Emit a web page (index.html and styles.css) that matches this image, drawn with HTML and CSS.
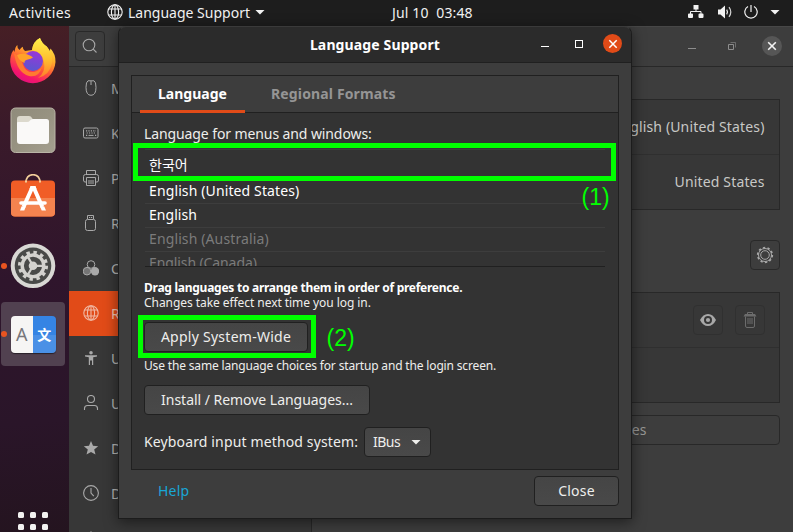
FILE: index.html
```html
<!DOCTYPE html>
<html lang="en">
<head>
<meta charset="utf-8">
<title>Language Support</title>
<link rel="stylesheet" href="styles.css">
</head>
<body>
<svg class="defs" width="0" height="0">
  <defs>
    <symbol id="globe" viewBox="0 0 16 16"><g fill="none" stroke="currentColor" stroke-width="1.1"><circle cx="8" cy="8" r="7.2"/><ellipse cx="8" cy="8" rx="3.6" ry="7.2"/><path d="M8 .8v14.4M1.6 5h12.8M1.6 11h12.8"/></g></symbol>
  </defs>
</svg>
<header class="topbar">
  <span class="activities">Activities</span>
  <div class="appmenu">
    <svg class="ic16" viewBox="0 0 16 16"><use href="#globe"/></svg>
    <span>Language Support</span>
    <i class="caret"></i>
  </div>
  <span class="clock">Jul 10 &nbsp;03:48</span>
  <div class="tray">
    <svg width="16" height="14" viewBox="0 0 16 14"><path fill="currentColor" d="M5.500 0h5v4.500h-5zM0 9.500q0-1 1-1h3q1 0 1 1V12q0 1-1 1H1q-1 0-1-1zM10.500 9.500q0-1 1-1h3q1 0 1 1V12q0 1-1 1h-3q-1 0-1-1z"/><path fill="none" stroke="currentColor" d="M8 4v2.500M2.500 9V6.500h10.500V9"/></svg>
    <svg width="16" height="14" viewBox="0 0 16 14"><path fill="currentColor" d="M1 4.500h2.500L8 .5v13L3.500 9.500H1z"/><path fill="none" stroke="currentColor" stroke-width="1.200" d="M9.700 4.700q1.500 2.300 0 4.600"/><path fill="none" stroke="currentColor" stroke-width="1.200" opacity=".85" d="M12 2.200q3.600 4.800 0 9.600"/></svg>
    <svg width="14" height="14" viewBox="0 0 14 14"><path fill="none" stroke="currentColor" stroke-width="1.200" d="M4 1.500a6.200 6.200 0 1 0 6 0M7 0v7"/></svg>
    <i class="caret"></i>
  </div>
</header>

<div class="desktop">
  <nav class="dock">
    <div class="tile">
      <svg width="48" height="48" viewBox="0 0 48 48">
        <defs>
          <linearGradient id="fx" x1=".8" y1="0" x2=".3" y2="1"><stop offset="0" stop-color="#fff44f"/><stop offset=".35" stop-color="#ffb12b"/><stop offset=".6" stop-color="#ff5a36"/><stop offset=".85" stop-color="#f5156c"/><stop offset="1" stop-color="#e0107e"/></linearGradient>
          <linearGradient id="fy" x1=".5" y1="0" x2=".5" y2="1"><stop offset="0" stop-color="#fff04a"/><stop offset=".55" stop-color="#ffbd2e"/><stop offset="1" stop-color="#ff7a2d"/></linearGradient>
          <linearGradient id="fp" x1=".6" y1="0" x2=".4" y2="1"><stop offset="0" stop-color="#9a35d8"/><stop offset="1" stop-color="#5a57d0"/></linearGradient>
        </defs>
        <path fill="url(#fx)" d="M8.300 7Q8 10 10.500 12Q12 9.500 13.700 8.700Q13.800 11.500 16 13L23 12Q24 3.500 31 0Q32.500 5 37.700 8.500Q40 11 40.500 14L41.500 10.500Q46.700 16 46.500 24A22.700 22.700 0 0 1 1.200 24Q1 17 4.500 12L5.500 14Q6 9 8.300 7z"/>
        <path fill="url(#fy)" d="M23 12Q24 3.500 31 0Q32.500 5 37.700 8.500Q44 15 43 25Q41 37 29 40Q37 34 35 24Q33 14 23 12z"/>
        <circle cx="24" cy="23" r="10" fill="url(#fp)"/>
        <path fill="#ff7a30" d="M5 15Q12 20 14 27Q17 35 25 34Q30 33 33 29Q30 40 20 38Q8 35 5 15z"/>
        <path fill="#ffa229" d="M8 17Q15 14 22 18L24 19.500Q22 21 19 21.500Q15 22 15.500 25Q10 23 8 17z"/>
      </svg>
    </div>
    <div class="tile">
      <svg width="48" height="48" viewBox="0 0 48 48">
        <defs><linearGradient id="fg" x1="0" y1="0" x2="1" y2="1"><stop offset="0" stop-color="#8f8b7b"/><stop offset=".5" stop-color="#979281"/><stop offset="1" stop-color="#a5a090"/></linearGradient></defs>
        <rect x="2" y="2" width="44" height="44.500" rx="4.500" fill="url(#fg)" stroke="#b9b4a6"/>
        <path fill="#dcd9cd" d="M8 13q0-3 3-3h9q2 0 3 2l1 1.500h9v8H8z"/>
        <path fill="#faf9f8" d="M8 17q0-1 1-1h9q2 0 3-1.500t3-1.500h13.500q2.500 0 2.500 2.500V35q0 3-3 3H11q-3 0-3-3z"/>
      </svg>
    </div>
    <div class="tile">
      <svg width="48" height="48" viewBox="0 0 48 48">
        <path fill="none" stroke="#f3cf9b" stroke-width="1.600" d="M16.800 9V8q1-7.300 7.200-7.300T31.200 8v1"/>
        <rect x="2" y="6.500" width="44" height="36" rx="4" fill="#f15d26"/>
        <path fill="#f4834f" d="M2 24h44v14.500q0 4-4 4H6q-4 0-4-4z"/>
        <path fill="#f3cf9b" d="M16 6.500h2v2h-2zM30 6.500h2v2h-2z"/>
        <g stroke="#fff" fill="none"><path stroke-width="4" d="M23.500 13L14.500 33M24.500 13l8.800 20"/><path stroke-width="3.600" stroke-linecap="round" d="M12 29h24"/></g>
        <path fill="#fff" d="M21.500 12h5l1 3h-7zM12.500 32.500l4.300 0-1.500 4H11zM31 32.500h4.300l1.700 4h-4.300z"/>
      </svg>
    </div>
    <div class="tile running">
      <svg width="48" height="48" viewBox="0 0 48 48">
        <circle cx="24" cy="23.800" r="22.300" fill="#d8d8d4"/><circle cx="24" cy="23.800" r="18.300" fill="#484a48"/>
        <circle cx="24" cy="23.800" r="13.300" fill="none" stroke="#d2d2ce" stroke-width="3.500" stroke-dasharray="3.400 3.564"/>
        <circle cx="24" cy="23.800" r="10.800" fill="none" stroke="#d2d2ce" stroke-width="3.400"/>
        <circle cx="24" cy="23.800" r="4.300" fill="#d2d2ce"/>
        <path stroke="#d2d2ce" stroke-width="2.200" d="M24 23.800h10M24 23.800l-5-8.700M24 23.800l-5 8.700"/>
      </svg>
    </div>
    <div class="tile running active">
      <div class="langicon"><span class="la">A</span><span class="lb">文</span></div>
    </div>
    <div class="appgrid"><i></i><i></i><i></i><i></i><i></i><i></i></div>
  </nav>

  <main class="settings">
    <div class="sethead">
      <div class="sqbtn search"><svg class="ic16" viewBox="0 0 16 16"><g fill="none" stroke="currentColor" stroke-width="1.100"><circle cx="7" cy="7" r="5.800"/><path d="M11.200 11.200l3.300 3.300"/></g></svg></div>
      <div class="wbtns">
        <i class="wmin"></i>
        <svg class="wrest" width="9" height="9" viewBox="0 0 9 9"><path fill="none" stroke="currentColor" d="M.5 2.500h5v5h-5z"/><path fill="none" stroke="currentColor" opacity=".6" d="M2.500.5h5v5"/></svg>
        <span class="wclose"><svg width="10" height="10" viewBox="0 0 10 10"><path stroke="currentColor" stroke-width="1.600" d="M1.200 1.200l7.600 7.600M8.800 1.200L1.200 8.800"/></svg></span>
      </div>
    </div>
    <div class="setbody">
      <ul class="sidebar">
        <li><svg class="ic16" viewBox="0 0 16 16"><path fill="none" stroke="currentColor" d="M5 .8h6q2 1 2 6.500 0 8-5 8t-5-8Q3 1.800 5 .8zM8 1v4"/></svg><span>M</span></li>
        <li><svg class="ic16" viewBox="0 0 16 16"><rect x=".5" y="3" width="14.500" height="10" rx="1.500" fill="none" stroke="currentColor"/><path fill="none" stroke="currentColor" stroke-width="1.200" stroke-dasharray="1.200 1.200" d="M3 5.800h10M3.600 8h9M3 10.400h1.300M12 10.400h1.300"/><path stroke="currentColor" d="M5.500 10.400h5"/></svg><span>K</span></li>
        <li><svg class="ic16" viewBox="0 0 16 16"><path fill="none" stroke="currentColor" d="M3.500 4.500V.5h9v4M3 12H2Q.5 12 .5 10V6.500Q.5 4.500 2.500 4.500h11q2 0 2 2V10q0 2-1.500 2h-1M3.500 7.500h9v8h-9zM5 11h6M5 13h6"/></svg><span>P</span></li>
        <li><svg class="ic16" viewBox="0 0 16 16"><path fill="none" stroke="currentColor" d="M4.500 4V.5h6V4M6 2.500h1.200M8 2.500h1.200"/><rect x="2.500" y="4.500" width="10" height="11" rx="2" fill="none" stroke="currentColor"/></svg><span>R</span></li>
        <li><svg class="ic16" viewBox="0 0 16 16"><circle cx="8" cy="4.500" r="3.800" fill="none" stroke="currentColor"/><circle cx="4" cy="11.200" r="3.800" fill="currentColor" fill-opacity=".55" stroke="currentColor"/><circle cx="12" cy="11.200" r="4.200" fill="currentColor"/></svg><span>C</span></li>
        <li class="sel"><svg class="ic16" viewBox="0 0 16 16"><use href="#globe"/></svg><span>R</span></li>
        <li><svg class="ic16" viewBox="0 0 16 16"><path fill="currentColor" d="M8 1a1.800 1.800 0 1 1 0 3.600A1.800 1.800 0 0 1 8 1zM2 5.200h12v1.300l-3.800.8V15H9v-4.500H7V15H5.800V7.300L2 6.500z"/></svg><span>U</span></li>
        <li><svg class="ic16" viewBox="0 0 16 16"><g fill="none" stroke="currentColor" stroke-width="1.100"><circle cx="8" cy="4" r="3.500"/><path d="M1.500 15v-1.500q0-3 3-3h7q3 0 3 3V15"/></g></svg><span>U</span></li>
        <li><svg class="ic16" viewBox="0 0 16 16"><path fill="currentColor" d="M8 1l2 4.800 5.200.4-4 3.400 1.300 5L8 11.900l-4.500 2.700 1.300-5-4-3.400L6 5.800z"/></svg><span>D</span></li>
        <li><svg class="ic16" viewBox="0 0 16 16"><g fill="none" stroke="currentColor" stroke-width="1.100"><circle cx="8" cy="8" r="7.400"/><path d="M8 3v5l2.800 3.200"/></g></svg><span>D</span></li>
        <li><svg class="ic16" viewBox="0 0 16 16"><path fill="currentColor" d="M7.300 1.500h1.400L9.500 4h-3z"/></svg></li>
      </ul>
      <div class="content">
        <div class="panel">
          <div class="prow">English (United States)</div>
          <div class="prow">United States</div>
        </div>
        <div class="sqbtn gear"><svg width="18" height="18" viewBox="0 0 18 18"><g fill="none" stroke="currentColor"><circle cx="9" cy="9" r="7.300" stroke-width="1.700" stroke-dasharray="2.300 2.286"/><circle cx="9" cy="9" r="6.500"/><circle cx="9" cy="9" r="4.300"/></g></svg></div>
        <div class="panel second">
          <div class="prow">
            <div class="sqbtn"><svg class="ic16 eye" viewBox="0 0 16 16"><path fill="currentColor" fill-rule="evenodd" d="M0 8q3-6 8-6t8 6q-3 6-8 6T0 8zM8 4a4 4 0 1 0 0 8 4 4 0 0 0 0-8z"/><circle cx="8" cy="8" r="2.100" fill="currentColor"/></svg></div>
            <div class="sqbtn"><svg class="ic16 trash" viewBox="0 0 16 16"><path fill="none" stroke="currentColor" d="M5.500 2V.5h5V2M3.500 4.500v9.500q0 1.500 1.500 1.500h6q1.500 0 1.500-1.500V4.500M6 6v6M8 6v6M10 6v6"/><path fill="currentColor" d="M3 2h10l1.500 2.500h-13z"/></svg></div>
          </div>
          <div class="prow"></div>
        </div>
        <div class="manage">Manage Installed Languages</div>
      </div>
    </div>
  </main>
</div>

<section class="dialog">
  <div class="titlebar">
    <h1>Language Support</h1>
    <div class="dbtns">
      <i class="wmin"></i><i class="wmax"></i>
      <span class="wclose"><svg width="10" height="10" viewBox="0 0 10 10"><path stroke="currentColor" stroke-width="1.500" d="M1.300 1.300l7.400 7.400M8.700 1.300L1.300 8.700"/></svg></span>
    </div>
  </div>
  <div class="notebook">
    <div class="tabs"><span class="tab on">Language</span><span class="tab">Regional Formats</span></div>
    <div class="page">
      <p class="lead">Language for menus and windows:</p>
      <ul class="langs">
        <li class="first">한국어</li>
        <li class="wide">English (United States)</li>
        <li>English</li>
        <li class="dim">English (Australia)</li>
        <li class="dim ca">English (Canada)</li>
      </ul>
      <p class="small bold">Drag languages to arrange them in order of preference.</p>
      <p class="small changes">Changes take effect next time you log in.</p>
      <div class="btn apply">Apply System-Wide</div>
      <p class="small same">Use the same language choices for startup and the login screen.</p>
      <div class="btn install">Install / Remove Languages...</div>
      <div class="imrow"><span>Keyboard input method system:</span><div class="btn ibus"><span>IBus</span><i class="caret"></i></div></div>
    </div>
  </div>
  <div class="actions"><a class="help">Help</a><div class="btn close">Close</div></div>
</section>

<div class="mark mark1"></div><span class="num num1">(1)</span>
<div class="mark mark2"></div><span class="num num2">(2)</span>
</body>
</html>
```
FILE: styles.css
```css
* { box-sizing: border-box; margin: 0; padding: 0; }
html, body { width: 793px; height: 532px; overflow: hidden; }
body { font: 14px/20px "Noto Sans", "Noto Sans CJK KR", sans-serif; color: #eeeeec; background: #24141f; position: relative; }
ul { list-style: none; }
svg { display: block; flex: none; }
.defs { position: absolute; }
.ic16 { width: 16px; height: 16px; }
.caret { flex: none; width: 10px; height: 5px; background: currentColor; clip-path: polygon(0 0, 100% 0, 50% 100%); }

.topbar { height: 26px; background: #1d1d1d; display: grid; grid-template-columns: 98px 285px 1fr auto; align-items: center; padding: 0 13px 2px 9px; color: #f2f2f2; }
.activities { letter-spacing: .38px; }
.appmenu { display: flex; align-items: center; }
.appmenu .ic16 { margin-left: -.5px; }
.appmenu span { margin: 0 5px; padding: 1px 0 0 .5px; }
.clock { white-space: pre; letter-spacing: .15px; }
.activities, .clock { padding-top: 1px; }
.tray { display: flex; align-items: center; gap: 12px; }
.tray svg:nth-child(1) { margin-right: 1px; }
.tray svg:nth-child(2) { margin-right: -1px; }

.desktop { display: flex; height: 506px; }
.dock { flex: none; width: 69px; padding: 4px 0 0 1px; display: flex; flex-direction: column; gap: 4px; background: linear-gradient(175deg, #461f25 0%, #3a1a2a 20%, #2f152c 50%, #2a1529 78%, #24141f 100%); }
.tile { position: relative; flex: none; width: 64px; height: 64px; border-radius: 4px; display: flex; align-items: center; justify-content: center; }
.running::before { content: ""; position: absolute; left: 0; top: 29px; width: 6px; height: 6px; border-radius: 50%; background: #e95420; }
.active { background: #514150; }
.langicon { display: flex; width: 45px; height: 37px; border-radius: 4px; overflow: hidden; box-shadow: 0 1px 1px rgba(0,0,0,.5); }
.langicon span { flex: 1; text-align: center; line-height: 36px; }
.la { background: #f6f5f4; color: #77767b; font-size: 18px; }
.lb { background: linear-gradient(#3584e4 50%, #4a90e6 50%); color: #fff; font: bold 14px "Noto Sans CJK SC", sans-serif; }
.appgrid { margin: 142px 0 0 17px; display: grid; grid-template-columns: repeat(3, 6px); gap: 6px; }
.appgrid i { height: 6px; background: #f2f1f0; border-radius: 1.500px; }

.settings { flex: 1; display: flex; flex-direction: column; color: #c8c8c6; background: #3d3d3d; border-top: 1px solid #474747; overflow: hidden; }
.sethead { flex: none; height: 40px; display: flex; justify-content: space-between; padding: 4px 11px 0 6px; border-bottom: 1px solid #282828; }
.sqbtn { width: 30px; height: 30px; border: 1px solid #292929; border-radius: 4px; display: flex; align-items: center; justify-content: center; color: #a8a8a8; }
.wbtns { display: flex; align-items: flex-start; color: #8d8d8d; }
.wmin { width: 8px; height: 1px; background: currentColor; }
.wbtns .wmin { margin: 17px 32px 0 0; }
.wrest { margin: 11px 25px 0 0; }
.wclose { display: flex; align-items: center; justify-content: center; border-radius: 50%; }
.wbtns .wclose { width: 20px; height: 20px; margin-top: 5px; background: #565656; color: #f4f4f4; }
.setbody { flex: 1; display: flex; min-height: 0; }
.sidebar { flex: none; width: 243px; background: #373737; border-right: 1px solid #282828; overflow: hidden; }
.sidebar li { height: 45px; display: flex; align-items: center; gap: 12px; padding: 0 0 1px 14px; white-space: nowrap; color: #a9a9a9; }
.sidebar li span { padding-top: 2px; color: #b4b4b2; }
.sidebar li:first-child { height: 44px; padding-bottom: 3px; }
.sidebar li.sel { background: #e14b18; color: #f0b8a3; }
.sidebar li.sel span { color: #f0c3b2; }
.content { flex: 1; padding: 32px 13px 0; display: flex; flex-direction: column; }
.panel { height: 111px; border: 1px solid #282828; background: #373737; flex: none; }
.prow { height: 54px; padding: 0 14.500px; display: flex; align-items: center; justify-content: flex-end; gap: 12px; letter-spacing: .15px; }
.prow + .prow { border-top: 1px solid #2f2f2f; height: 55px; }
.gear { align-self: flex-end; margin: 30px 0 22px; flex: none; }
.second .sqbtn { border-color: #303030; }
.second .sqbtn .eye { color: #a8a8a8; }
.second .sqbtn .trash { color: #6c6c6c; }
.manage { margin-top: 12px; height: 30px; border: 1px solid #282828; border-radius: 4px; text-align: center; line-height: 28px; padding-right: 4px; color: #989896; letter-spacing: .1px; }

.dialog { position: absolute; left: 118px; top: 26px; width: 514px; height: 493px; border: 1px solid #1c1c1c; border-top-color: #3a3a3a; border-radius: 8px 8px 0 0; background: #3d3d3d; box-shadow: 0 3px 14px rgba(0,0,0,.5); display: flex; flex-direction: column; }
.titlebar { flex: none; height: 36px; background: #2b2b2b; border-bottom: 1px solid #202020; border-radius: 7px 7px 0 0; display: grid; grid-template-columns: 1fr auto 1fr; }
.titlebar h1 { grid-column: 2; font: bold 14px/36px "Noto Sans", sans-serif; letter-spacing: .13px; color: #fff; }
.dbtns { display: flex; justify-content: flex-end; padding-right: 9px; color: #fff; }
.dbtns .wmin { margin: 19px 26px 0 0; }
.wmax { width: 8px; height: 8px; border: 1px solid currentColor; margin: 13px 20px 0 0; }
.dbtns .wclose { width: 19px; height: 19px; margin-top: 7px; background: #e14b18; }
.notebook { flex: none; margin: 12px 12px 0; height: 395px; border: 1px solid #202020; background: #333; }
.tabs { height: 37px; background: #3d3d3d; border-bottom: 1px solid #202020; display: flex; padding-left: 8px; gap: 8px; }
.tab { height: 37px; padding: 0 18px; font-weight: bold; line-height: 36px; color: #959595; letter-spacing: .14px; }
.tab.on { width: 105px; color: #fff; border-bottom: 3px solid #e14b18; letter-spacing: 0; }
.page { padding: 11px 13px 0 12px; }
.page p { white-space: nowrap; }
.lead { letter-spacing: -.1px; }
.langs { margin: 5px 0 13px 1px; width: 460px; height: 118px; overflow: hidden; border-top: 1px solid #3d3d3d; border-bottom: 1px solid #202020; }
.langs li { height: 24px; padding-left: 4px; line-height: 21px; border-bottom: 1px solid #3d3d3d; color: #fff; letter-spacing: .05px; }
.langs li.first { height: 30px; line-height: 28px; font-family: "Noto Sans CJK KR", sans-serif; }
.langs li.wide { letter-spacing: .12px; }
.langs li.dim { color: #7b7b7b; letter-spacing: .12px; }
.langs li.ca { letter-spacing: -.1px; }
.small { font-size: 12px; line-height: 15px; }
.bold { font-weight: bold; letter-spacing: -.26px; color: #fff; }
.changes { letter-spacing: -.06px; }
.btn { height: 30px; line-height: 28px; border: 1px solid #202020; border-radius: 4px; background: linear-gradient(#454545, #494949); text-align: center; white-space: nowrap; }
.apply { width: 164px; margin: 12px 0 6px; letter-spacing: .26px; }
.same { letter-spacing: -.16px; }
.install { width: 226px; margin: 12px 0; letter-spacing: -.03px; }
.imrow { display: flex; align-items: center; letter-spacing: .14px; }
.imrow > span { width: 220px; }
.ibus { width: 67px; display: flex; align-items: center; justify-content: space-between; padding: 0 9px 0 8px; letter-spacing: -.5px; }
.actions { display: flex; align-items: center; justify-content: space-between; padding: 6px 12px 0 39px; }
.help { color: #19a6d6; letter-spacing: .2px; }
.close { width: 85px; letter-spacing: .22px; }

.mark { position: absolute; border: 5px solid #00ff00; }
.mark1 { left: 133px; top: 143px; width: 483px; height: 38px; }
.mark2 { left: 138px; top: 315px; width: 178px; height: 43px; }
.num { position: absolute; font: 23px/24px "Liberation Sans", Arial, sans-serif; color: #00ff00; }
.num1 { left: 581.500px; top: 185px; }
.num2 { left: 326.500px; top: 326px; }
```
